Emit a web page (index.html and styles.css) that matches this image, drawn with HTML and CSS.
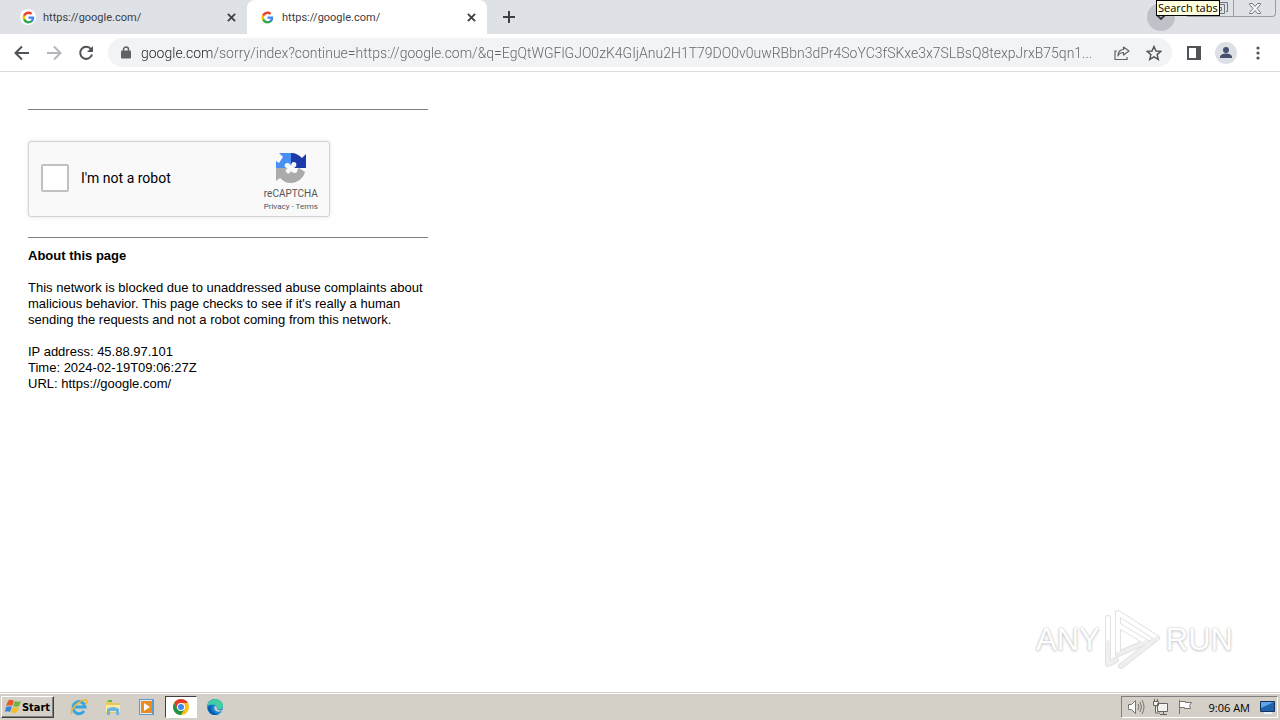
FILE: index.html
```html
<!DOCTYPE html>
<html lang="en">
<head>
<meta charset="utf-8">
<title>https://google.com/</title>
<link rel="stylesheet" href="styles.css">
</head>
<body>
<svg class="defs" aria-hidden="true">
  <symbol id="google" viewBox="0 0 48 48">
    <path fill="#4285f4" d="M45 24.5c0-1.600-.2-3.100-.4-4.500H24v8.500h11.800c-.5 2.800-2 5-4.400 6.600v5.500h7.100c4.200-3.900 6.500-9.500 6.500-16.100z"/>
    <path fill="#34a853" d="M24 46c6 0 11-2 14.600-5.400l-7.100-5.500c-2 1.300-4.500 2.100-7.500 2.100-5.700 0-10.600-3.900-12.300-9.100H4.300v5.700C7.900 41 15.400 46 24 46z"/>
    <path fill="#fbbc05" d="M11.700 28.200c-.4-1.300-.7-2.700-.7-4.200s.2-2.900.7-4.200v-5.700H4.300C2.900 17.100 2 20.400 2 24s.9 6.900 2.300 9.900l7.400-5.700z"/>
    <path fill="#ea4335" d="M24 10.800c3.200 0 6.100 1.100 8.400 3.300l6.300-6.300C34.900 4.200 30 2 24 2 15.400 2 7.900 6.900 4.300 14.100l7.400 5.700c1.700-5.200 6.600-9 12.300-9z"/>
  </symbol>
  <symbol id="cross" viewBox="0 0 10 10"><path d="M1 1l8 8M9 1L1 9" stroke="#3c4043" stroke-width="2" fill="none"/></symbol>
</svg>
<div class="screen">
  <header class="browser">
    <div class="tabstrip">
      <div class="tab">
        <span class="favicon"><svg><use href="#google"/></svg></span>
        <span class="tab-title">https://google.com/</span>
        <button class="tab-close" aria-label="Close tab"><svg><use href="#cross"/></svg></button>
      </div>
      <div class="tab tab-active">
        <span class="favicon"><svg><use href="#google"/></svg></span>
        <span class="tab-title">https://google.com/</span>
        <button class="tab-close" aria-label="Close tab"><svg><use href="#cross"/></svg></button>
      </div>
      <button class="new-tab" aria-label="New tab"><svg width="12" height="12" viewBox="0 0 12 12"><path d="M6 0v12M0 6h12" stroke="#3c4043" stroke-width="2"/></svg></button>
      <div class="window-area">
        <button class="search-tabs" aria-label="Search tabs"><svg width="10" height="6" viewBox="0 0 10 6"><path d="M1 1l4 4 4-4" fill="none" stroke="#3c4043" stroke-width="2"/></svg></button>
        <div class="window-buttons">
          <button class="restore" aria-label="Restore"><svg width="12" height="12" viewBox="0 0 12 12" fill="none" stroke="#71757e"><path d="M3.500 2V.5h8v9H10M.5 2.500h8v9h-8zM3.500 5.500h2v3h-2z"/></svg></button>
          <button class="close-window" aria-label="Close window"><svg width="12" height="11" viewBox="0 0 12 11"><path d="M.5.5h3L6 3.500 8.500.5h3v1L8 5.500l3.500 4v1h-3L6 7.500l-2.500 3h-3v-1L4 5.500.5 1.500z" fill="#f5f6f8" stroke="#71757e"/></svg></button>
        </div>
        <span class="tooltip">Search tabs</span>
      </div>
    </div>
    <div class="toolbar">
      <button aria-label="Back"><svg width="16" height="16" viewBox="0 0 16 16" fill="none" stroke="#505357" stroke-width="2"><path d="M15 8H2M8 1.500L1.500 8 8 14.500"/></svg></button>
      <button aria-label="Forward"><svg width="16" height="16" viewBox="0 0 16 16" fill="none" stroke="#b4b6b9" stroke-width="2"><path d="M1 8h13M8 1.500L14.500 8 8 14.500"/></svg></button>
      <button aria-label="Reload"><svg width="16" height="16" viewBox="0 0 16 16"><path d="M13 4.200A6 6 0 1 0 14 9.500" fill="none" stroke="#505357" stroke-width="2"/><path d="M15 1v6H9z" fill="#505357"/></svg></button>
      <div class="omnibox">
        <svg width="10" height="13" viewBox="0 0 10 13"><path d="M2.500 5V3.500a2.500 2.500 0 0 1 5 0V5" fill="none" stroke="#5f6368" stroke-width="1.500"/><rect y="4.500" width="10" height="8" rx="1" fill="#5f6368"/></svg>
        <input class="address" type="text" aria-label="Address" value="google.com/sorry/index?continue=https://google.com/&amp;q=EgQtWGFlGJO0zK4GIjAnu2H1T79DO0v0uwRBbn3dPr4SoYC3fSKxe3x7SLBsQ8texpJrxB75qn1...">
        <button aria-label="Share"><svg width="16" height="14" viewBox="0 0 16 14" fill="none" stroke="#5f6368"><path d="M3 5H1v8.500h12V11" stroke-width="1.200"/><path d="M9.500 1l5.500 4-5.500 4V6.500C7 6.500 5 7.500 4 10c0-4 2-6.500 5.500-6.500z" stroke-width="1.200" stroke-linejoin="round"/></svg></button>
        <button aria-label="Bookmark"><svg width="16" height="16" viewBox="0 0 16 16"><path d="M8 1.500l2 4.500 4.800.4-3.700 3.200 1.200 4.800L8 11.800l-4.300 2.600 1.200-4.800L1.200 6.400 6 6z" fill="none" stroke="#505357" stroke-width="1.400"/></svg></button>
      </div>
      <button aria-label="Side panel"><svg width="14" height="14" viewBox="0 0 14 14"><path d="M1 1h12v12H1z" fill="none" stroke="#505357" stroke-width="2"/><path d="M9 1h4v12H9z" fill="#505357"/></svg></button>
      <button aria-label="Profile"><svg width="22" height="22" viewBox="0 0 22 22"><circle cx="11" cy="11" r="11" fill="#dcdfe4"/><circle cx="11" cy="8" r="3" fill="#46516e"/><path d="M5 16v-1c0-2 3-3.500 6-3.500s6 1.500 6 3.500v1z" fill="#46516e"/></svg></button>
      <button aria-label="Menu"><svg width="4" height="14" viewBox="0 0 4 14" fill="#505357"><circle cx="2" cy="2" r="1.600"/><circle cx="2" cy="7" r="1.600"/><circle cx="2" cy="12" r="1.600"/></svg></button>
    </div>
  </header>

  <main class="page">
    <div class="content">
      <hr>
      <div class="captcha">
        <label class="captcha-label"><input type="checkbox"><span>I'm not a robot</span></label>
        <div class="captcha-brand">
          <svg width="32" height="32" viewBox="0 0 32 32">
            <path fill="#4a90f2" d="M16 1v15H1V9l3 2 4-6-4-4z"/>
            <path fill="#1c3aa9" d="M16 1c5 0 8 2 11 5l4-4v14H16z"/>
            <path fill="#ababab" d="M1 16h15l5 3 3-3 6 4c-2 7-8 11-14 11-5 0-8-2-11-5l-4 3z"/>
            <path fill="#f9f9f9" d="M10 12c2-2 5-1 6 2 0-4 3-5 5-3 1 2 0 4-2 5 3 0 4 2 3 4-2 2-4 1-6-1-1 3-4 3-5 1-1-2 0-3 2-4-3 0-4-2-3-4z"/>
          </svg>
          <span class="brand-name">reCAPTCHA</span>
          <span class="brand-links"><a href="#">Privacy</a> - <a href="#">Terms</a></span>
        </div>
      </div>
      <hr>
      <h1>About this page</h1>
      <p>This network is blocked due to unaddressed abuse complaints about<br>malicious behavior. This page checks to see if it's really a human<br>sending the requests and not a robot coming from this network.</p>
      <p>IP address: 45.88.97.101<br>Time: 2024-02-19T09:06:27Z<br>URL: https://google.com/</p>
    </div>
    <div class="watermark">
      <span>ANY</span>
      <svg width="60" height="64" viewBox="0 0 60 64" fill="none" stroke-linejoin="round" stroke-linecap="round">
        <g stroke="#e2e2e2" stroke-width="6"><path d="M15 43V5l39 25-36 28M15 43V17l28 17M15 46l28-12M5 10v46l8-4"/></g>
        <g stroke="#fff" stroke-width="4"><path d="M15 43V5l39 25M15 43V17l28 17M5 10v46"/></g>
        <g stroke="#efefef" stroke-width="4"><path d="M54 30L18 58M43 34L15 46M5 34v22l8-4"/></g>
      </svg>
      <span>RUN</span>
    </div>
  </main>

  <footer class="taskbar">
    <button class="start"><svg width="17" height="16" viewBox="0 0 17 16"><path fill="#e65a26" d="M3 2c2-2 4-1 6 0L7 7C5 6 3 6 1 7z"/><path fill="#70b33e" d="M10 2c2 1 4 1 6 0l-2 5c-2 1-4 1-6 0z"/><path fill="#3b83d5" d="M1 8c2-1 4-1 6 0l-2 5c-2-1-3-1-5 0z"/><path fill="#f5bd28" d="M8 8c2 1 4 1 6 0l-2 5c-2 2-4 1-6 0z"/></svg>Start</button>
    <div class="launchers">
      <button aria-label="Internet Explorer"><svg width="18" height="18" viewBox="0 0 18 18" fill="none"><path d="M14 13a6 6 0 1 1 1-4H5" stroke="#39a5df" stroke-width="3"/><path d="M2 16C-1 12 10 1 16 2c2 1 0 4-1 5" stroke="#e8b737" stroke-width="1.500"/></svg></button>
      <button aria-label="Explorer"><svg width="18" height="18" viewBox="0 0 18 18"><path fill="#e9c75c" d="M2 3h5l1 2h8v10H2z"/><path fill="#5eb548" d="M4 2h4v2H4z"/><path fill="#fae9a1" d="M2 7h14v7H2z"/><path fill="#6bb4df" d="M3 11q6-4 12 0v6h-3v-4H6v4H3z"/></svg></button>
      <button aria-label="Media Player"><svg width="18" height="18" viewBox="0 0 18 18"><path fill="#5b9dce" d="M1 1h15v16H1z"/><path fill="#dcecf6" d="M2 2h12v14H2z"/><path fill="#f18a1c" d="M3 3h11v12H3z"/><path fill="#fff" d="M6 5l6 4-6 4z"/></svg></button>
      <button class="running" aria-label="Chrome"><svg width="16" height="16" viewBox="0 0 16 16"><circle cx="8" cy="8" r="8" fill="#fbc116"/><path fill="#e33b2e" d="M1.100 4A8 8 0 0 1 14.900 4H8L4.500 10z"/><path fill="#229342" d="M1.100 4A8 8 0 0 0 8 16l3.500-6h-7z"/><circle cx="8" cy="8" r="4" fill="#fff"/><circle cx="8" cy="8" r="3" fill="#4285f4"/></svg></button>
      <button aria-label="Edge"><svg width="18" height="18" viewBox="0 0 18 18"><circle cx="9" cy="9" r="8" fill="#1683d8"/><path fill="#42cfa0" d="M1 8C3-1 17-1 17 8c0 4-4 4-6 3 1-4-4-6-10-3z"/><path fill="#0b5cab" d="M6 8c-2 4 2 8 7 8-6 3-11-1-11-6 0-2 2-3 4-2z"/><path fill="#d4d0c8" d="M9 8c3 0 1 3 3 4 2 1 4 0 5-1-1 3-6 4-8 1-1-2-1-3 0-4z"/></svg></button>
    </div>
    <div class="tray">
      <svg width="18" height="16" viewBox="0 0 18 16" fill="#fff" stroke="#77756f"><path d="M1.500 5.500h3l4-4v13l-4-4h-3z"/><path fill="none" d="M11 5q2 3 0 6M13 3q3 5 0 10M15 1q4 7 0 14"/></svg>
      <svg width="18" height="16" viewBox="0 0 18 16" fill="#f3f2ee" stroke="#66645f"><path d="M5.500 4.500h10v8h-10zM8 15.500h7M11.500 13v2M1.500 2.500h5v4h-5zM2.500 0v2M5.500 0v2M3.500 7v7H8"/></svg>
      <svg width="17" height="16" viewBox="0 0 17 16" fill="#fff" stroke="#77756f"><path d="M2.500 1v14M2.500 2.500h6v1h6l-2 3 1 3h-6v-1h-5z"/></svg>
      <time>9:06 AM</time>
      <svg width="17" height="15" viewBox="0 0 17 15"><path fill="#1f62b0" stroke="#12345c" d="M1.500 1.500h14v10h-14z"/><path fill="#5da7e6" d="M2 2h13L2 8z"/><path fill="#e9f1f8" d="M5 12h8v2H5z"/></svg>
    </div>
  </footer>
</div>
</body>
</html>
```
FILE: styles.css
```css
* { box-sizing: border-box; }
body { margin: 0; font-family: "Liberation Sans", Arial, sans-serif; background: #fff; color: #000; }
button { border: 0; padding: 0; background: none; font: inherit; display: flex; align-items: center; justify-content: center; }
svg { display: block; flex: none; }
.defs { position: absolute; width: 0; height: 0; }
.screen { min-height: 100vh; display: flex; flex-direction: column; }

.tabstrip { display: flex; height: 34px; padding-left: 8px; background: #dee1e6; font: 11px Roboto, sans-serif; color: #3c4043; }
.tab { display: flex; align-items: center; width: 239px; padding: 0 11px 0 12px; gap: 7px; }
.tab-active { width: 240px; background: #fff; border-radius: 8px 8px 0 0; }
.favicon { display: grid; place-items: center; width: 16px; height: 16px; border-radius: 50%; background: #fff; }
.favicon svg { width: 13px; height: 13px; }
.tab-title { flex: 1; }
.tab-close { width: 10px; height: 16px; }
.tab-close svg { width: 9px; height: 9px; }
.new-tab { width: 44px; }
.window-area { position: relative; display: flex; margin-left: auto; width: 133px; }
.search-tabs { width: 28px; height: 28px; margin-top: 3px; border-radius: 50%; background: #bfc2c8; }
.window-buttons { display: flex; margin-left: 10px; height: 17px; border: 1px solid #9a9da4; border-top: 0; border-radius: 0 0 4px 4px; }
.restore { width: 47px; padding-left: 24px; }
.close-window { width: 42px; border-left: 1px solid #9a9da4; }
.tooltip { position: absolute; left: 9px; top: 0; height: 16px; padding: 0 1px; border: 1px solid #000; background: #ffffe1; color: #000; font: 11px/14px "Open Sans", sans-serif; white-space: nowrap; }

.toolbar { display: flex; align-items: center; height: 38px; padding: 0 6px; border-bottom: 1px solid #dadce0; }
.toolbar > button { width: 32px; height: 28px; }
.omnibox { flex: 1; min-width: 0; display: flex; align-items: center; height: 29px; margin: 0 6px; padding: 0 2px 0 13px; border-radius: 15px; background: #f1f3f4; }
.omnibox button { width: 32px; height: 28px; }
.address { flex: 1; min-width: 0; margin-left: 10px; padding: 0; border: 0; outline: 0; font: 300 14px/20px Roboto, sans-serif; color: #5f6368; background: linear-gradient(90deg, #202124 71px, #5f6368 71px); -webkit-background-clip: text; background-clip: text; -webkit-text-fill-color: transparent; }

.page { position: relative; flex: 1; padding: 20px; }
.content { width: 400px; max-width: 100%; margin: 0 8px; font-size: 13px; line-height: 16px; }
hr { margin: 17px 0 0; border: 0; height: 1px; background: #808080; }
h1 { margin: 10px 0 0; font-size: 13px; line-height: 16px; }
p { margin: 16px 0 0; white-space: nowrap; }
.captcha { display: flex; justify-content: space-between; width: 302px; height: 76px; margin: 31px 0 20px; padding: 0 11px 0 12px; border: 1px solid #d3d3d3; border-radius: 3px; background: #f9f9f9; box-shadow: 0 0 4px #e4e4e4; }
.captcha + hr { margin-top: 0; }
.captcha-label { display: flex; align-items: center; gap: 12px; padding-bottom: 2px; font: 14px/20px Roboto, sans-serif; }
.captcha-label input { appearance: none; width: 28px; height: 28px; margin: 0; border: 2px solid #c1c1c1; border-radius: 2px; background: #fff; }
.captcha-brand { display: flex; flex-direction: column; align-items: center; padding-top: 10px; color: #555; }
.brand-name { margin-top: 2px; font: 10px/16px Roboto, sans-serif; }
.brand-links { font: 8px/10px Roboto, sans-serif; }
.brand-links a { color: inherit; text-decoration: none; }
.watermark { position: absolute; right: 47px; bottom: 20px; display: flex; align-items: center; gap: 3px; color: #fff; font: 31px/64px "Liberation Sans", sans-serif; text-shadow: 0 0 2px #bbb, 0 1px 3px #ccc; }

.taskbar { display: flex; align-items: center; height: 28px; padding: 1px 2px 0 1px; border-top: 1px solid #d4d0c8; background: #d4d0c8; box-shadow: inset 0 1px #fff; }
.start { width: 53px; height: 22px; border: 1px solid; border-color: #fff #404040 #404040 #fff; box-shadow: inset -1px -1px #808080; font: bold 11px "DejaVu Sans Condensed", "DejaVu Sans", sans-serif; }
.launchers { display: flex; margin-left: 8px; }
.launchers button { width: 34px; height: 22px; }
.launchers .running { width: 32px; margin: 0 1px; background: #fff; border: 1px solid; border-color: #404040 #fff #fff #404040; }
.tray { display: flex; align-items: center; margin-left: auto; height: 22px; padding: 0 1px 0 5px; gap: 7px; border: 1px solid; border-color: #808080 #fff #fff #808080; }
.tray time { margin: 0 2px 0 8px; font: 11px "Open Sans", sans-serif; }
```
